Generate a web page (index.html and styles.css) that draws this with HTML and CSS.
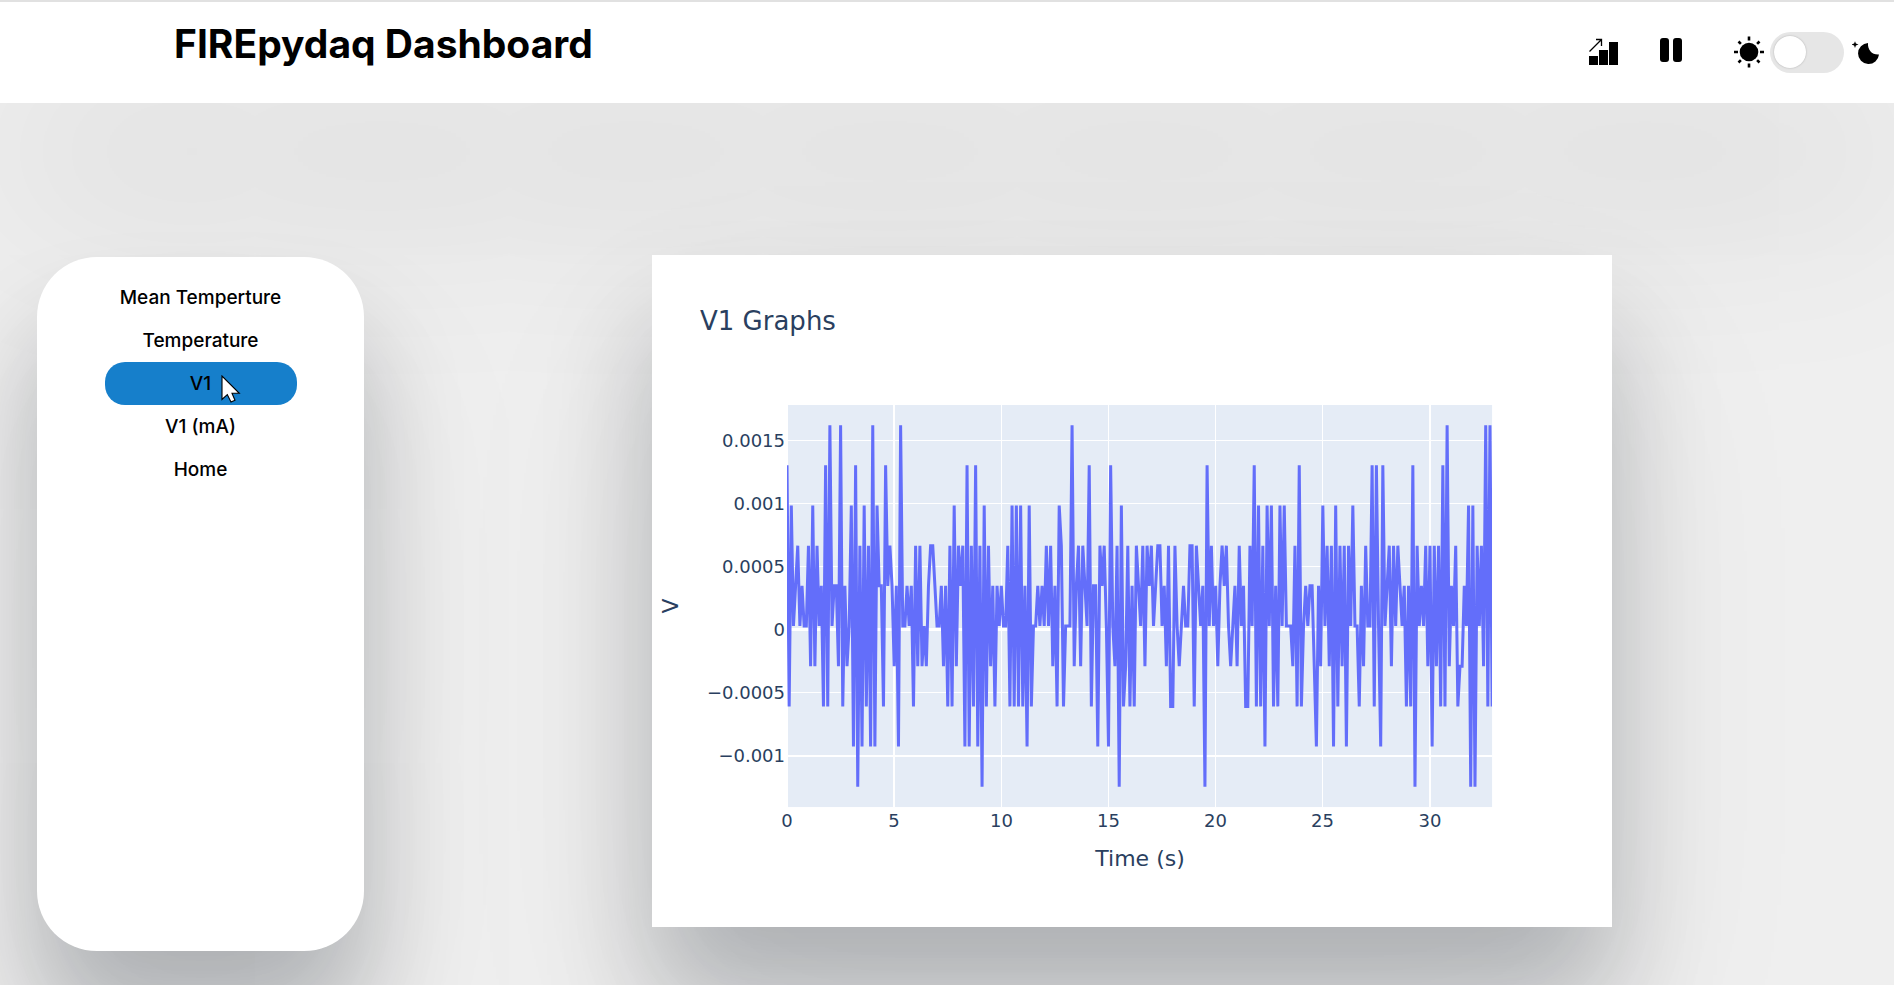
FILE: index.html
```html
<!DOCTYPE html>
<html lang="en">
<head>
<meta charset="utf-8">
<title>FIREpydaq Dashboard</title>
<link rel="stylesheet" href="styles.css">
</head>
<body>
<header class="topbar">
  <h1 class="brand">FIREpydaq Dashboard</h1>
  <div class="controls">
    <button class="icon-button" type="button" aria-label="Show graphs">
      <svg width="30" height="28" viewBox="0 0 30 28" aria-hidden="true">
        <path d="M0 18h9v9H0zM10 12h9v15h-9zM20 4h9v23h-9z"/>
        <path d="M0.500 13.500L12.500 1.500M7 1.500h5.500V8" fill="none" stroke="#000" stroke-width="1.300"/>
      </svg>
    </button>
    <button class="icon-button" type="button" aria-label="Pause">
      <svg width="24" height="24" viewBox="0 0 24 24" aria-hidden="true">
        <rect x="1" width="9" height="24" rx="3"/>
        <rect x="14" width="9" height="24" rx="3"/>
      </svg>
    </button>
    <label class="theme">
      <svg width="32" height="32" viewBox="-16 -16 32 32" aria-hidden="true">
        <circle r="9.300"/>
        <path d="M0-15.500v4M0 11.500v4M-15 0h4M11 0h4M-10.500-10.500l2.400 2.400M8.100 8.100l2.400 2.400M10.500-10.500l-2.400 2.400M-8.100 8.100l-2.400 2.400" stroke="#000" stroke-width="2.600"/>
      </svg>
      <input class="switch" type="checkbox" aria-label="Dark mode">
      <svg class="moon" width="28" height="28" viewBox="0 0 28 28" aria-hidden="true">
        <path d="M16 5A10.500 10.500 0 1 0 27 16.500C20 17 15.500 12 16 5z"/>
        <path d="M3 3.200L3.900 5.600 6.500 6.500 3.900 7.400 3 10 2.100 7.400-.500 6.500 2.100 5.600z"/>
      </svg>
    </label>
  </div>
</header>
<main class="content">
  <nav class="sidebar">
    <a class="tab" href="#mean">Mean Temperture</a>
    <a class="tab" href="#temperature">Temperature</a>
    <a class="tab tab-active" href="#v1">V1
      <svg class="pointer" width="20" height="28" viewBox="0 0 20 28" aria-hidden="true">
        <path d="M1 1V24.500L6.300 19.600 10 27 14 25.200 11 18.300H18.300z" fill="#fff" stroke="#000" stroke-width="1.100"/>
      </svg>
    </a>
    <a class="tab" href="#v1ma">V1 (mA)</a>
    <a class="tab" href="#home">Home</a>
  </nav>
  <section class="stage">
    <div class="card">
      <svg class="chart" viewBox="0 0 960 672" role="img" aria-label="V1 Graphs">
        <text class="chart-title" x="48" y="75">V1 Graphs</text>
        <rect class="plot" x="136" y="150" width="704" height="402"/>
        <g id="grid"></g>
        <clipPath id="plot-area"><rect x="135" y="150" width="705" height="402"/></clipPath>
        <path class="trace" id="trace" clip-path="url(#plot-area)"/>
        <g id="ticks"></g>
        <text class="axis-title" x="488" y="611" text-anchor="middle">Time (s)</text>
        <text class="axis-title" transform="translate(26 351) rotate(-90)" text-anchor="middle">V</text>
      </svg>
    </div>
  </section>
</main>
<script src="chart.js"></script>
</body>
</html>
```
FILE: styles.css
```css
* {
  box-sizing: border-box;
}

body {
  margin: 0;
  min-height: 100vh;
  background: #efefef;
  color: #000;
  font-family: Inter, "Liberation Sans", sans-serif;
}

.topbar {
  display: flex;
  justify-content: space-between;
  align-items: flex-start;
  height: 103px;
  padding: 19px 14px 0 174px;
  border-top: 2px solid #e1e1e1;
  background: #fff;
  box-shadow: 0 100px 200px rgba(0, 0, 0, 0.1);
}

.brand {
  margin: 0;
  font-size: 39px;
  line-height: 46px;
  font-weight: 700;
}

.controls {
  display: flex;
  align-items: center;
  height: 62px;
}

.icon-button {
  display: flex;
  margin: 0 40px 0 0;
  padding: 0;
  border: 0;
  background: none;
}

.icon-button + .icon-button {
  margin-right: 50px;
  padding-bottom: 4px;
}

.theme {
  display: flex;
  align-items: center;
  gap: 5px;
}

.moon {
  margin-left: 3px;
}

.switch {
  appearance: none;
  display: flex;
  align-items: center;
  width: 74px;
  height: 41px;
  margin: 0;
  padding: 0 4px;
  border-radius: 21px;
  background: #e6e6e6;
}

.switch::before {
  content: "";
  width: 32px;
  height: 32px;
  border-radius: 50%;
  background: #fff;
  box-shadow: 0 0 2px rgba(0, 0, 0, 0.25);
}

.switch:checked {
  justify-content: flex-end;
}

.content {
  display: flex;
  align-items: flex-start;
  padding: 152px 0 34px 37px;
}

.sidebar,
.card {
  background: #fff;
  box-shadow:
    0 75px 100px rgba(0, 14, 22, 0.22),
    0 100px 200px rgba(0, 14, 22, 0.08);
}

.sidebar {
  display: flex;
  flex-direction: column;
  align-items: center;
  flex: none;
  width: 327px;
  min-height: 694px;
  margin-top: 2px;
  padding-top: 19px;
  border-radius: 60px;
}

.tab {
  position: relative;
  width: 192px;
  border-radius: 20px;
  color: #000;
  font-size: 19px;
  line-height: 43px;
  font-weight: 500;
  text-align: center;
  text-decoration: none;
}

.tab-active {
  background: #167fcb;
}

.pointer {
  position: absolute;
  left: 116px;
  top: 13px;
}

.stage {
  flex: 1;
  padding-left: 6px;
}

.card {
  width: 63%;
  margin: 0 auto;
}

.chart {
  display: block;
  width: 100%;
  fill: #2a3f5f;
  font-family: Verdana, "DejaVu Sans", sans-serif;
}

.chart-title {
  font-size: 26px;
}

.axis-title {
  font-size: 22px;
}

.tick {
  font-size: 18px;
}

.plot {
  fill: #e5ecf6;
}

.gridline {
  stroke: #fff;
  stroke-width: 1;
  shape-rendering: crispEdges;
}

.gridline-bold {
  stroke-width: 2;
}

.gridline-zero {
  stroke-width: 3;
}

.trace {
  fill: none;
  stroke: #636efa;
  stroke-width: 3;
  stroke-miterlimit: 2;
}
```
FILE: chart.js
```js
// One digit per 0.1 s sample: the ADC level, where 4 is the level nearest 0 V.
const levels = [
  "8274564544", "6373645282", "9455392534", "7180617261", "9175528565",
  "3519445452", "6363435665", "4453526273", "6561816281", "6072635254",
  "5446272727", "2517244545", "4646352762", "4449356365", "4825516564",
  "1843607236", "2526546365", "6456645362", "2643454466", "2654508464",
  "5356564345", "3645226482", "7261747252", "7474443628",
  "2454553153", "7463617263", "6164744253", "6448284184", "5636465452",
  "5280645463", "6163628293", "5462335470", "7064639292"
].join("");

const NS = "http://www.w3.org/2000/svg";
function add(parent, name, attrs, text) {
  const el = document.createElementNS(NS, name);
  for (const key in attrs) el.setAttribute(key, attrs[key]);
  if (text) el.textContent = text;
  document.getElementById(parent).appendChild(el);
}

const xStep = 2.143, levelStep = 40.17;
document.getElementById("trace").setAttribute("d",
  "M" + [...levels].map((c, i) =>
    (135 + i * xStep).toFixed(2) + " " + (371 - (c - 4) * levelStep).toFixed(2)).join("L"));

[[0, 135], [5, 242], [10, 349.5], [15, 456.5], [20, 563.5], [25, 670.5], [30, 778]].forEach(([label, x]) => {
  if (label) add("grid", "line", {
    class: "gridline" + (Number.isInteger(x) ? " gridline-bold" : ""),
    x1: x, x2: x, y1: 150, y2: 552
  });
  add("ticks", "text", { class: "tick", x: x, y: 572, "text-anchor": "middle" }, String(label));
});

[["0.0015", 185.5, ""], ["0.001", 248.5, ""], ["0.0005", 311.5, ""], ["0", 374.5, " gridline-zero"],
 ["−0.0005", 437.5, ""], ["−0.001", 501, " gridline-bold"]].forEach(([label, y, weight]) => {
  add("grid", "line", { class: "gridline" + weight, x1: 136, x2: 840, y1: y, y2: y });
  add("ticks", "text", { class: "tick", x: 133, y: y + 6, "text-anchor": "end" }, label);
});
```
